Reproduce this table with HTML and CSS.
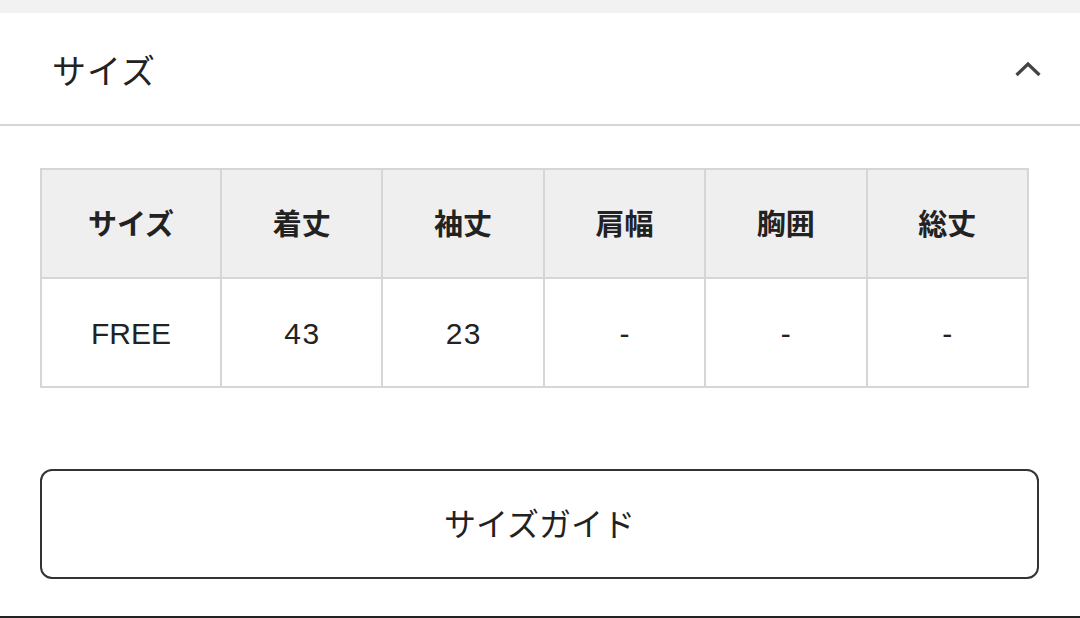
FILE: index.html
```html
<!DOCTYPE html>
<html lang="ja">
<head>
<meta charset="utf-8">
<link rel="stylesheet" href="styles.css">
</head>
<body>
<div class="page">
  <div class="topbar"></div>
  <div class="header">
    <span class="title">サイズ</span>
    <svg class="chevron" width="28" height="16" viewBox="0 0 28 16"><path d="M2.5 14 L14 3 L25.5 14" fill="none" stroke="#444" stroke-width="3.2" stroke-linecap="butt" stroke-linejoin="miter"/></svg>
  </div>
  <div class="content">
    <table class="size-table">
      <thead>
        <tr><th class="c-first">サイズ</th><th>着丈</th><th>袖丈</th><th>肩幅</th><th>胸囲</th><th>総丈</th></tr>
      </thead>
      <tbody>
        <tr><td class="c-first">FREE</td><td class="num">43</td><td class="num">23</td><td>-</td><td>-</td><td>-</td></tr>
      </tbody>
    </table>
    <button class="guide-btn">サイズガイド</button>
  </div>
  <div class="bottom-line"></div>
</div>
</body>
</html>
```
FILE: styles.css
```css
html, body {
  margin: 0;
  padding: 0;
  background: #fff;
}
body {
  font-family: "Liberation Sans", "Noto Sans CJK JP", sans-serif;
  color: #222;
}
.page {
  width: 1080px;
  height: 618px;
  display: flex;
  flex-direction: column;
  overflow: hidden;
}
.topbar {
  height: 13px;
  background: #f2f2f2;
  flex: none;
}
.header {
  flex: none;
  display: flex;
  align-items: center;
  justify-content: space-between;
  padding: 2px 38px 0 52px;
  box-sizing: border-box;
  border-bottom: 2px solid #d6d6d6;
  height: 113px;
}
.title {
  font-family: "Noto Sans CJK JP", sans-serif;
  font-size: 34px;
  font-weight: 400;
  color: #222;
  letter-spacing: 1px;
}
.chevron {
  display: block;
  margin-top: -2px;
}
.content {
  flex: 1;
  display: flex;
  flex-direction: column;
  padding: 42px 41px 0 40px;
}
.size-table {
  width: 989px;
  border-collapse: collapse;
  table-layout: fixed;
}
.size-table th, .size-table td {
  border: 2px solid #d6d6d6;
  text-align: center;
  padding: 0;
  color: #222;
}
.size-table th {
  background: #efefef;
  height: 103px;
  font-family: "Noto Sans CJK JP", sans-serif;
  font-size: 29px;
  font-weight: 700;
  padding-bottom: 4px;
}
.size-table td {
  height: 105px;
  font-size: 30px;
  font-weight: 400;
  padding-top: 2px;
}
.size-table td.num {
  letter-spacing: 1.5px;
  text-indent: 1.5px;
}
.size-table .c-first {
  width: 178px;
}
.guide-btn {
  margin-top: 81px;
  width: 999px;
  height: 110px;
  border: 2px solid #333;
  border-radius: 12px;
  background: #fff;
  font-family: "Noto Sans CJK JP", sans-serif;
  font-size: 32px;
  color: #222;
  padding: 0 0 4px 0;
}
.bottom-line {
  height: 2px;
  background: #222;
  flex: none;
}
```
